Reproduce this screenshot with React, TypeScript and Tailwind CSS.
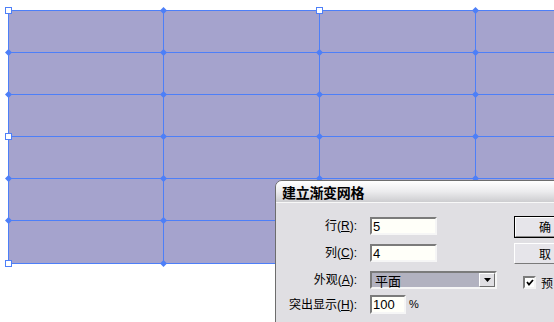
import React from "react";

const xs = [8.5, 163.5, 319.5, 475.5, 631.5];
const ys = [10.5, 52.5, 94.5, 136.5, 178.5, 220.5, 263.5];
const squares: Array<[number, number]> = [
  [8.5, 10.5],
  [319.5, 10.5],
  [8.5, 136.5],
  [8.5, 263.5],
];

function Mesh() {
  const isSquare = (x: number, y: number) => squares.some(([a, b]) => a === x && b === y);
  return (
    <svg width={554} height={322} className="block">
      <rect x={8} y={10} width={624} height={254} fill="#a5a3cd" />
      {xs.map((x) => (
        <line key={"v" + x} x1={x} y1={10} x2={x} y2={264} stroke="#4d7ff8" strokeWidth={1} />
      ))}
      {ys.map((y) => (
        <line key={"h" + y} x1={8} y1={y} x2={632} y2={y} stroke="#4d7ff8" strokeWidth={1} />
      ))}
      {xs.map((x) =>
        ys.map((y) =>
          isSquare(x, y) ? null : (
            <polygon
              key={"d" + x + "-" + y}
              points={`${x - 3.5},${y} ${x},${y - 3.5} ${x + 3.5},${y} ${x},${y + 3.5}`}
              fill="#4d7ff8"
            />
          )
        )
      )}
      {squares.map(([x, y]) => (
        <rect key={"s" + x + "-" + y} x={x - 3} y={y - 3} width={6} height={6} fill="#ffffff" stroke="#4d7ff8" strokeWidth={1} />
      ))}
    </svg>
  );
}

const inset =
  "border-2 border-t-[#7b7b7b] border-l-[#7b7b7b] border-b-[#f6f6f6] border-r-[#f6f6f6]";

function Label({ text, k }: { text: string; k: string }) {
  return (
    <div className="w-[82px] shrink-0 text-right text-[12px] leading-none text-black pr-[1px]">
      {text}(<span className="underline">{k}</span>):
    </div>
  );
}

export default function App() {
  const cjk = { fontFamily: '"Liberation Sans","Noto Sans CJK SC",sans-serif' };
  const cjkOnly = { fontFamily: '"Noto Sans CJK SC",sans-serif' };
  return (
    <div className="relative w-[554px] h-[322px] overflow-hidden bg-white" style={cjk}>
      <Mesh />
      <div className="absolute left-[275px] top-[180px] w-[330px] h-[170px] rounded-tl-[7px] border border-[#6d6d6d] bg-[#e0dfe3] overflow-hidden">
        <div className="h-[22px] bg-linear-to-b from-[#ffffff] via-[#ececee] to-[#cdcdd0] border-b border-[#f8f8f8] flex items-center pl-[6px]">
          <span className="text-[14px] font-bold leading-none text-black tracking-[-0.3px]" style={cjkOnly}>
            建立渐变网格
          </span>
        </div>
        <div className="flex">
          <div className="flex flex-col pt-[14px]">
            <div className="flex items-center h-[18px]">
              <Label text="行" k="R" />
              <div className={`ml-[12px] w-[67px] h-[18px] bg-[#fffff9] ${inset} flex items-center pl-[1px] text-[13px] leading-none`}>5</div>
            </div>
            <div className="flex items-center h-[18px] mt-[9px]">
              <Label text="列" k="C" />
              <div className={`ml-[12px] w-[67px] h-[18px] bg-[#fffff9] ${inset} flex items-center pl-[1px] text-[13px] leading-none`}>4</div>
            </div>
            <div className="flex items-center h-[18px] mt-[9px]">
              <Label text="外观" k="A" />
              <div className={`ml-[12px] w-[127px] h-[18px] bg-[#b2b2c0] ${inset} flex items-center justify-between pl-[3px] text-[13px] leading-none`}>
                <span style={cjkOnly}>平面</span>
                <div className="w-[16px] h-[14px] bg-[#e0dfe3] border border-t-white border-l-white border-b-[#6e6e6e] border-r-[#6e6e6e] flex items-center justify-center">
                  <svg width="7" height="4" viewBox="0 0 7 4">
                    <polygon points="0,0 7,0 3.5,4" fill="#000" />
                  </svg>
                </div>
              </div>
            </div>
            <div className="flex items-center h-[19px] mt-[6px]">
              <Label text="突出显示" k="H" />
              <div className={`ml-[12px] w-[36px] h-[19px] bg-[#fffff9] ${inset} flex items-center pl-[1px] text-[13px] leading-none`}>100</div>
              <span className="ml-[3px] text-[11px] leading-none">%</span>
            </div>
          </div>
          <div className="flex flex-col ml-[17px] pt-[13px]">
            <div className="w-[75px] h-[22px] border border-black bg-[#e6e5ea]">
              <div className="w-full h-full border border-t-white border-l-white border-b-[#8a8a8a] border-r-[#8a8a8a] flex items-center pl-[23px] text-[12px] leading-none" style={cjkOnly}>
                确
              </div>
            </div>
            <div className="mt-[5px] w-[75px] h-[21px] bg-[#e6e5ea] border border-t-white border-l-white border-b-[#7a7a7a] border-r-[#7a7a7a] flex items-center pl-[24px] text-[12px] leading-none" style={cjkOnly}>
              取
            </div>
            <div className="mt-[12px] ml-[9px] flex items-center">
              <div className="w-[13px] h-[13px] bg-white border-2 border-t-[#7b7b7b] border-l-[#7b7b7b] border-b-[#f4f4f4] border-r-[#f4f4f4] flex items-center justify-center">
                <svg width="8" height="7" viewBox="0 0 8 7">
                  <polyline points="1,3 3,5.5 7,1" fill="none" stroke="#000" strokeWidth="1.8" />
                </svg>
              </div>
              <span className="ml-[5px] text-[12px] leading-none" style={cjkOnly}>预</span>
            </div>
          </div>
        </div>
      </div>
    </div>
  );
}
